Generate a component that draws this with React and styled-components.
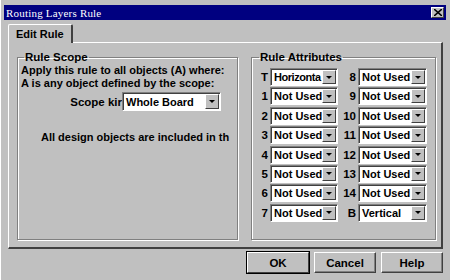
import styled, { createGlobalStyle } from 'styled-components'

const Global = createGlobalStyle`
  html, body { margin: 0; padding: 0; background: #c0c0c0; }
  body { font-family: "Liberation Sans", Arial, sans-serif; font-size: 11px; font-weight: bold; color: #000; }
`

const Window = styled.div`
  width: 450px;
  height: 280px;
  box-sizing: border-box;
  padding: 5px 4px 0 3px;
  overflow: hidden;
  border-left: 1px solid #fff;
`
const TitleBar = styled.div`
  height: 15px;
  background: #000080;
  display: flex;
  align-items: center;
  justify-content: space-between;
  padding: 0 2px 0 2px;
`
const TitleText = styled.span`
  color: #fff;
  font-family: "Liberation Serif", "Times New Roman", serif;
  font-weight: normal;
  font-size: 11px;
  letter-spacing: 0.2px;
`
const CloseBtn = styled.div`
  width: 13px;
  height: 11px;
  background: #c0c0c0;
  border-top: 1px solid #fff;
  border-left: 1px solid #fff;
  border-right: 1px solid #404040;
  border-bottom: 1px solid #404040;
  box-sizing: border-box;
  display: flex;
  align-items: center;
  justify-content: center;
`
const Content = styled.div`
  padding: 3px 0 0 4px;
`
const TabStrip = styled.div`
  display: flex;
  height: 19px;
  align-items: flex-end;
`
const Tab = styled.div`
  height: 19px;
  padding: 0 7px;
  box-sizing: border-box;
  border-top: 1px solid #fff;
  border-left: 1px solid #fff;
  border-right: 2px solid #404040;
  border-radius: 2px 2px 0 0;
  display: flex;
  align-items: center;
  margin-bottom: -1px;
  background: #c0c0c0;
  position: relative;
  z-index: 1;
`
const TabPage = styled.div`
  width: 435px;
  height: 207px;
  box-sizing: border-box;
  border-top: 1px solid #fff;
  border-left: 1px solid #fff;
  border-right: 2px solid #404040;
  border-bottom: 2px solid #404040;
  display: flex;
  gap: 13px;
  padding: 7px 0 0 8px;
`
const Group = styled.fieldset`
  margin: 0;
  min-width: 0;
  width: ${p => p.w}px;
  height: 190px;
  box-sizing: border-box;
  border: 1px solid #808080;
  box-shadow: 1px 1px 0 #fff, inset 1px 1px 0 #fff;
  padding: ${p => p.pad};
  overflow: hidden;
`
const Legend = styled.legend`
  padding: 0 1px;
  margin-left: 3px;
  font-size: 11.5px;
  line-height: 14px;
`
const Line = styled.div`
  line-height: 13px;
  white-space: nowrap;
`
const ScopeRow = styled.div`
  display: flex;
  align-items: center;
  margin-top: 2px;
`
const ScopeLabel = styled.span`
  width: 101px;
  text-align: right;
  white-space: nowrap;
  font-size: 11.5px;
`
const Note = styled.div`
  margin: 20px 0 0 20px;
  white-space: nowrap;
`
const Grid = styled.div`
  display: grid;
  grid-template-columns: 13px 68px 18px 69px;
  grid-auto-rows: 18px;
  row-gap: 1.4px;
  column-gap: 1px;
  margin-top: 4px;
`
const Num = styled.div`
  display: flex;
  align-items: center;
  justify-content: flex-end;
  padding-right: 1px;
  font-size: 11.5px;
`
const Select = styled.div`
  width: ${p => p.w || 68}px;
  height: ${p => p.h || 18}px;
  box-sizing: border-box;
  background: #fff;
  border-top: 1px solid #808080;
  border-left: 1px solid #808080;
  border-right: 1px solid #fff;
  border-bottom: 1px solid #fff;
  box-shadow: inset 1px 1px 0 #404040;
  display: flex;
  align-items: center;
  padding: 1px 1px 1px 3px;
  overflow: hidden;
`
const SelText = styled.span`
  flex: 1;
  white-space: nowrap;
  font-size: 11px;
  letter-spacing: ${p => p.tight ? '-0.45px' : 'normal'};
`
const Arrow = styled.div`
  width: 14px;
  align-self: stretch;
  flex-shrink: 0;
  box-sizing: border-box;
  background: #c0c0c0;
  border-top: 1px solid #fff;
  border-left: 1px solid #fff;
  border-right: 1px solid #404040;
  border-bottom: 1px solid #404040;
  display: flex;
  align-items: center;
  justify-content: center;
  &::after {
    content: "";
    border-left: 3px solid transparent;
    border-right: 3px solid transparent;
    border-top: 3px solid #000;
  }
`
const ButtonRow = styled.div`
  display: flex;
  justify-content: flex-end;
  gap: 5px;
  padding: 3px 0 0 0;
  width: 435px;
`
const Button = styled.div`
  width: 62px;
  height: 21px;
  box-sizing: border-box;
  border-top: 1px solid #fff;
  border-left: 1px solid #fff;
  border-right: 1px solid #404040;
  border-bottom: 1px solid #404040;
  box-shadow: ${p => p.primary ? '0 0 0 1px #000' : 'inset -1px -1px 0 #808080'};
  display: flex;
  align-items: center;
  justify-content: center;
  font-size: 11.5px;
`

const Drop = ({ text, w, h }) => (
  <Select w={w} h={h}>
    <SelText tight={text === 'Horizonta'}>{text}</SelText>
    <Arrow />
  </Select>
)

const rows = [
  ['T', 'Horizonta', '8', 'Not Used'],
  ['1', 'Not Used', '9', 'Not Used'],
  ['2', 'Not Used', '10', 'Not Used'],
  ['3', 'Not Used', '11', 'Not Used'],
  ['4', 'Not Used', '12', 'Not Used'],
  ['5', 'Not Used', '13', 'Not Used'],
  ['6', 'Not Used', '14', 'Not Used'],
  ['7', 'Not Used', 'B', 'Vertical'],
]

export default function App() {
  return (
    <>
      <Global />
      <Window>
        <TitleBar>
          <TitleText>Routing Layers Rule</TitleText>
          <CloseBtn>
            <svg width="8" height="7" viewBox="0 0 8 7">
              <path d="M0 0 L8 7 M8 0 L0 7" stroke="#000" strokeWidth="1.6" />
            </svg>
          </CloseBtn>
        </TitleBar>
        <Content>
          <TabStrip>
            <Tab>Edit Rule</Tab>
          </TabStrip>
          <TabPage>
            <Group w={221} pad="0 4px 0 3px">
              <Legend>Rule Scope</Legend>
              <Line>Apply this rule to all objects (A) where:</Line>
              <Line>A is any object defined by the scope:</Line>
              <ScopeRow>
                <ScopeLabel>Scope kir</ScopeLabel>
                <Drop text="Whole Board" w={99} h={19} />
              </ScopeRow>
              <Note>All design objects are included in th</Note>
            </Group>
            <Group w={185} pad="0 4px 0 4px">
              <Legend>Rule Attributes</Legend>
              <Grid>
                {rows.map(r => [
                  <Num key={r[0] + 'a'}>{r[0]}</Num>,
                  <Drop key={r[0] + 'b'} text={r[1]} />,
                  <Num key={r[2] + 'c'}>{r[2]}</Num>,
                  <Drop key={r[2] + 'd'} text={r[3]} w={69} />,
                ])}
              </Grid>
            </Group>
          </TabPage>
          <ButtonRow>
            <Button primary>OK</Button>
            <Button>Cancel</Button>
            <Button>Help</Button>
          </ButtonRow>
        </Content>
      </Window>
    </>
  )
}
